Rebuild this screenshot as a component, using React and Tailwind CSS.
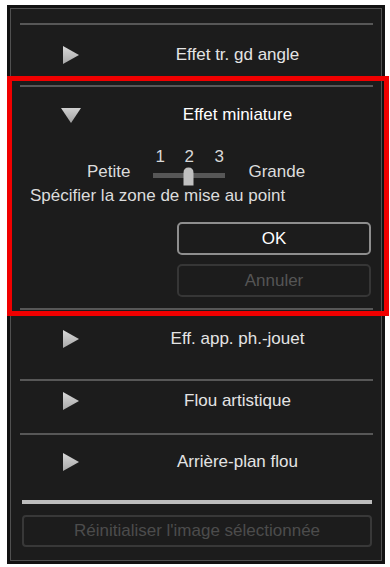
import React from "react";

const font = { fontFamily: '"Liberation Sans", Arial, sans-serif' };

function RightArrow() {
  return (
    <svg width="18" height="20" viewBox="0 0 18 20" className="shrink-0">
      <defs>
        <linearGradient id="ra" x1="0" y1="0" x2="0" y2="1">
          <stop offset="0" stopColor="#d8d8d8" />
          <stop offset="1" stopColor="#a8a8a8" />
        </linearGradient>
      </defs>
      <polygon points="1,1 17,10 1,19" fill="url(#ra)" />
    </svg>
  );
}

function DownArrow() {
  return (
    <svg width="22" height="17" viewBox="0 0 22 17" className="shrink-0">
      <defs>
        <linearGradient id="da" x1="0" y1="0" x2="0" y2="1">
          <stop offset="0" stopColor="#d0d0d0" />
          <stop offset="1" stopColor="#a0a0a0" />
        </linearGradient>
      </defs>
      <polygon points="1,1 21,1 11,16" fill="url(#da)" />
    </svg>
  );
}

function Separator() {
  return <div className="h-[2px] ml-[9px] mr-[8px] bg-[#575757]" />;
}

function Row({ label, className }) {
  return (
    <div className={"flex items-center pl-[51px] " + className}>
      <RightArrow />
      <div className="flex-1 ml-[14px] text-center text-[17px] leading-[20px] text-[#e4e4e4]">
        {label}
      </div>
    </div>
  );
}

function Slider() {
  return (
    <div className="w-[72px]">
      <div className="relative h-[16px] text-[17px] leading-[16px] text-[#d8d8d8]">
        <span className="absolute left-[2px]">1</span>
        <span className="absolute left-[31px]">2</span>
        <span className="absolute left-[61px]">3</span>
      </div>
      <div className="relative mt-[2px] h-[19px] pt-[6px]">
        <div className="h-[5px] bg-[#575757]" />
        <svg
          width="11"
          height="19"
          viewBox="0 0 11 19"
          className="absolute left-[30px] top-0"
        >
          <path d="M0.5 18.5 V6 Q0.5 0.5 5.5 0.5 Q10.5 0.5 10.5 6 V18.5 Z" fill="#c0c0c0" />
        </svg>
      </div>
    </div>
  );
}

export default function App() {
  return (
    <div className="relative h-[567px] w-[390px] bg-white pt-[5px] pl-[7px]" style={font}>
      <div className="w-[378px] h-[559px] bg-[#121212] p-[3px]">
        <div className="h-full border border-[#505050] bg-[#1c1c1c] pt-[14px]">
          <Separator />
          <Row label="Effet tr. gd angle" className="h-[60px]" />
          <Separator />

          <div className="pb-[11px]">
            <div className="flex h-[56px] items-center pl-[49px]">
              <DownArrow />
              <div className="flex-1 ml-[12px] text-center text-[17px] text-white">
                Effet miniature
              </div>
            </div>
            <div className="mt-[6px] flex items-start pl-[76px] text-[17px] text-[#dcdcdc]">
              <span className="mt-[13px] leading-[20px]">Petite</span>
              <div className="ml-[23px]">
                <Slider />
              </div>
              <span className="ml-[23px] mt-[13px] leading-[20px]">Grande</span>
            </div>
            <div className="pl-[19px] text-[17px] leading-[20px] text-[#dcdcdc]">
              Spécifier la zone de mise au point
            </div>
            <div className="ml-[166px] mr-[10px] mt-[16px] flex h-[33px] items-center justify-center rounded-[5px] border-2 border-[#8e8e8e] text-[17px] text-white">
              OK
            </div>
            <div className="ml-[166px] mr-[10px] mt-[9px] flex h-[33px] items-center justify-center rounded-[5px] border-2 border-[#363636] text-[17px] text-[#555555]">
              Annuler
            </div>
          </div>

          <Separator />
          <Row label="Eff. app. ph.-jouet" className="pt-[19px] pb-[30px]" />
          <Separator />
          <Row label="Flou artistique" className="pt-[10px] pb-[22px]" />
          <Separator />
          <Row label="Arrière-plan flou" className="pt-[17px] pb-[28px]" />
          <div className="h-[4px] ml-[11px] mr-[9px] bg-[#bdbdbd]" />
          <div className="ml-[11px] mr-[9px] mt-[11px] flex h-[32px] items-center justify-center rounded-[4px] border-2 border-[#383838] text-[17px] text-[#4c4c4c]">
            Réinitialiser l'image sélectionnée
          </div>
        </div>
      </div>

      <div className="absolute left-[7px] top-[76px] h-[240px] w-[382px] border-[5px] border-[#f00000]" />
    </div>
  );
}
